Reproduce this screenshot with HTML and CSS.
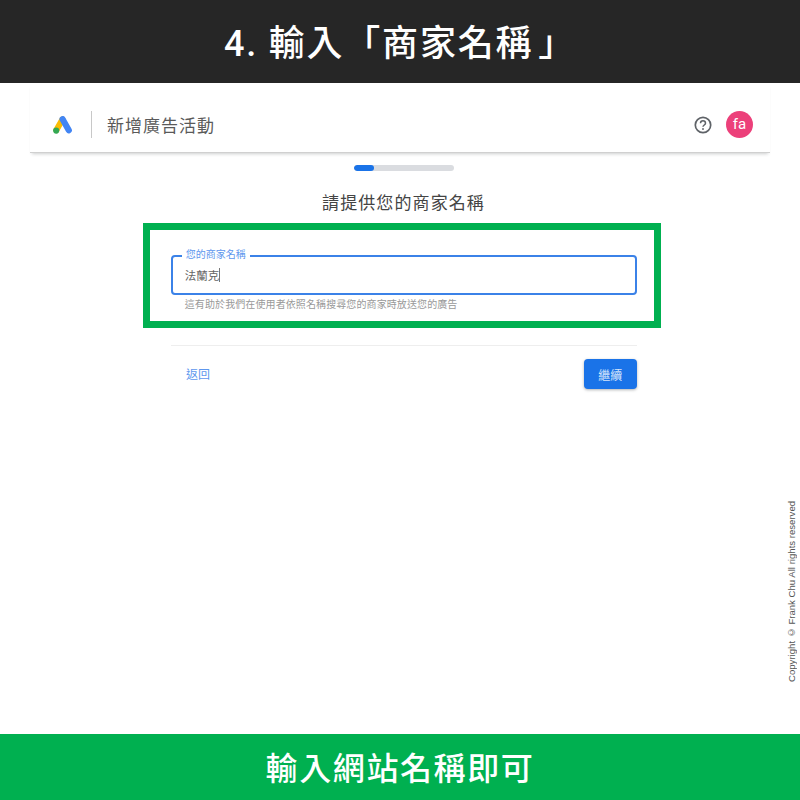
FILE: index.html
```html
<!DOCTYPE html>
<html lang="zh-Hant">
<head>
<meta charset="utf-8">
<title>輸入商家名稱</title>
<link rel="stylesheet" href="styles.css">
</head>
<body>
<div class="page">
  <header class="banner-top"><span>4. 輸入「商家名稱<span class="close-mark">」</span></span></header>
  <main class="content">
    <div class="appbar">
      <div class="appbar-left">
        <svg class="logo" viewBox="0 0 20 18" width="20" height="18">
          <path d="M9.4 3.4 3.4 14" stroke="#fbbc04" stroke-width="6" stroke-linecap="round" fill="none"/>
          <path d="M9.6 3.2 15.8 14.2" stroke="#4285f4" stroke-width="6.2" stroke-linecap="round" fill="none"/>
          <circle cx="3.2" cy="14.6" r="3.1" fill="#34a853"/>
        </svg>
        <span class="divider"></span>
        <span class="app-title">新增廣告活動</span>
      </div>
      <div class="appbar-right">
        <svg class="help" viewBox="0 0 18 18" width="18" height="18">
          <circle cx="9" cy="9" r="7.7" fill="none" stroke="#5f6368" stroke-width="1.7"/>
          <path d="M6.5 7.2a2.5 2.5 0 0 1 5 0c0 1.7-2.5 1.9-2.5 3.6" fill="none" stroke="#5f6368" stroke-width="1.5"/>
          <circle cx="9" cy="13" r="0.95" fill="#5f6368"/>
        </svg>
        <span class="avatar">fa</span>
      </div>
    </div>
    <div class="flow">
      <div class="progress"><span class="progress-fill"></span></div>
      <h1 class="heading">請提供您的商家名稱</h1>
      <div class="highlight">
        <div class="field">
          <span class="field-label">您的商家名稱</span>
          <span class="field-value">法蘭克</span><span class="caret"></span>
        </div>
        <p class="hint">這有助於我們在使用者依照名稱搜尋您的商家時放送您的廣告</p>
      </div>
      <div class="actions">
        <a class="back">返回</a>
        <button class="next">繼續</button>
      </div>
    </div>
    <div class="copyright">Copyright © Frank Chu All rights reserved</div>
  </main>
  <footer class="banner-bottom">輸入網站名稱即可</footer>
</div>
</body>
</html>
```
FILE: styles.css
```css
* { box-sizing: border-box; }
html, body { margin: 0; padding: 0; background: #fff; }
body { font-family: "Noto Sans CJK TC", "Roboto", sans-serif; text-spacing-trim: space-all; }
.page { width: 800px; height: 800px; display: flex; flex-direction: column; overflow: hidden; }
.banner-top {
  height: 83px; flex: none; background: #262626; color: #fff;
  display: flex; align-items: center; justify-content: center;
  font-size: 36px; font-weight: 500; letter-spacing: 1.8px; padding-bottom: 3px;
  font-family: "Roboto", "Noto Sans CJK TC", sans-serif;
}
.close-mark { margin-left: 5px; }
.banner-bottom {
  height: 66px; flex: none; background: #00b050; color: #fff;
  display: flex; align-items: center; justify-content: center;
  font-size: 32px; font-weight: 500; letter-spacing: 1.6px; padding-bottom: 3px;
}
.content { flex: 1; position: relative; display: flex; flex-direction: column; align-items: center; }
.appbar {
  width: 740px; height: 70px; flex: none; display: flex; align-items: center; justify-content: space-between;
  border-bottom: 1px solid #d0d0d0; box-shadow: 0 3px 3px -2px rgba(60,64,67,.25); padding: 14px 17px 0 23px;
}
.appbar-left, .appbar-right { display: flex; align-items: center; }
.logo { display: block; }
.divider { width: 1px; height: 27px; background: #c8c8c8; margin: 0 15px 0 18px; }
.app-title { font-size: 17px; color: #5a5a5a; letter-spacing: 1px; }
.help { margin-right: 14px; }
.avatar {
  width: 27px; height: 27px; border-radius: 50%; background: #ec407a; color: #fff;
  font: 15px/27px "Roboto", sans-serif; text-align: center;
}
.flow { width: 800px; padding-left: 8px; display: flex; flex-direction: column; align-items: center; }
.progress { width: 100px; height: 6px; margin-top: 12px; background: #dadce0; border-radius: 3px; flex: none; overflow: hidden; }
.progress-fill { display: block; width: 20px; height: 6px; background: #1a73e8; border-radius: 3px; }
.heading { margin: 18px 0 0 -1px; font-size: 17px; line-height: 26px; font-weight: 400; color: #444; letter-spacing: 1.1px; }
.highlight { width: 518.5px; height: 104.5px; margin: 8px 4px 0 0; border: 7px solid #00b050; padding: 25px 17.5px 0 21px; flex: none; }
.field {
  position: relative; height: 40px; border: 2px solid #3b82e8; border-radius: 4px;
  display: flex; align-items: center; padding-left: 12px;
}
.field-label {
  position: absolute; top: -10px; left: 9px; padding: 0 4px; background: #fff;
  font-size: 10px; line-height: 14px; color: #5e97ee;
}
.field-value { font-size: 11.5px; color: #666; margin-top: -1px; }
.caret { width: 1px; height: 14px; background: #777; margin-top: -1px; }
.hint { margin: 2px 0 0 14px; font-size: 10px; line-height: 14px; color: #999; letter-spacing: 0.1px; }
.actions {
  width: 466px; margin-top: 17.5px; padding: 13px 0 0 15px; border-top: 1px solid #eee;
  display: flex; align-items: center; justify-content: space-between; flex: none;
}
.back { font-size: 12px; color: #5e97ee; margin-top: -1px; }
.next {
  width: 53.5px; height: 30px; border: 0; border-radius: 4px; background: #1a73e8; color: #d6e5fb;
  font: 12px "Noto Sans CJK TC", sans-serif; padding: 0;
  box-shadow: 0 1px 3px rgba(60,64,67,.4);
}
.copyright {
  position: absolute; right: 3px; top: 417px; height: 182px;
  writing-mode: vertical-rl; transform: rotate(180deg); text-align: left;
  font: 9.6px/11px "Liberation Sans", sans-serif; color: #555; white-space: nowrap;
}
```
